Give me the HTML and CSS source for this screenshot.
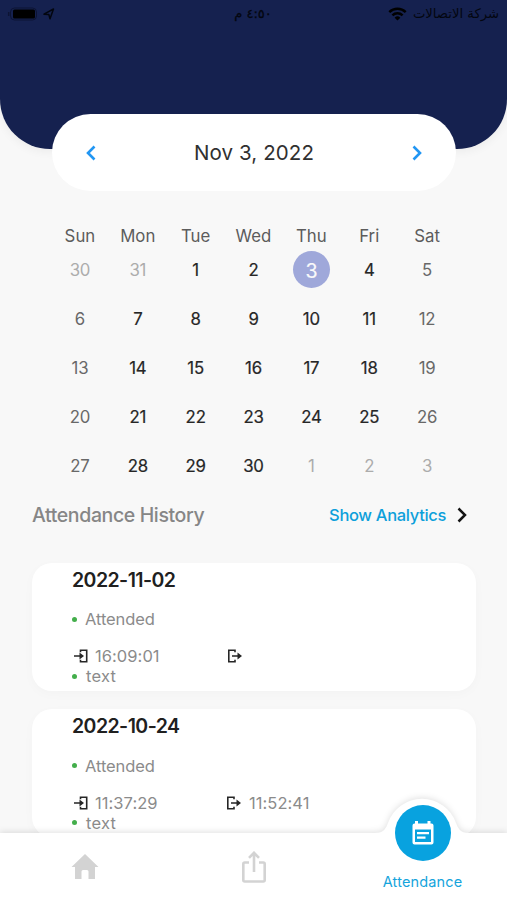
FILE: index.html
```html
<!DOCTYPE html>
<html lang="en">
<head>
<meta charset="utf-8">
<title>Attendance</title>
<link rel="stylesheet" href="styles.css">
</head>
<body>
<div class="app">
  <main class="content">
    <header class="header">
      <div class="status">
        <div class="status-side">
          <svg width="30" height="14" viewBox="0 0 30 14"><rect x="3.500" y="1" width="26" height="12" rx="4" fill="none" stroke="#0d1434"/><rect x="6" y="2.500" width="22" height="9" rx="1.500" fill="#000"/><path d="M1.700 5v4" stroke="#0d1434" stroke-width="1.500"/></svg>
          <svg width="12" height="12" viewBox="0 0 12 12"><path d="M1 6.200 10.500 1 7 10.800 5.800 6.400Z" fill="none" stroke="#03060f" stroke-width="1.500" stroke-linejoin="round"/></svg>
        </div>
        <div class="status-time" dir="rtl">٤:٥٠ م</div>
        <div class="status-side status-end">
          <svg width="19" height="14" viewBox="0 0 19 14"><g fill="none" stroke="#000" stroke-width="2.400"><path d="M1.300 5.200a11.600 11.600 0 0 1 16.400 0"/><path d="M4.400 8.400a7.200 7.200 0 0 1 10.200 0"/></g><path d="M9.500 13.600 6.600 10.700a4.100 4.100 0 0 1 5.800 0Z"/></svg>
          <span class="carrier" dir="rtl">شركة الاتصالات</span>
        </div>
      </div>
    </header>
    <section class="date-bar">
      <svg width="10" height="16" viewBox="0 0 10 16"><path d="M8.500 1.500 2 8l6.500 6.500" fill="none" stroke="#2196f3" stroke-width="2.600"/></svg>
      <span class="date">Nov 3, 2022</span>
      <svg width="10" height="16" viewBox="0 0 10 16"><path d="M1.500 1.500 8 8l-6.500 6.500" fill="none" stroke="#2196f3" stroke-width="2.600"/></svg>
    </section>
    <section class="calendar">
      <div class="week names"><span>Sun</span><span>Mon</span><span>Tue</span><span>Wed</span><span>Thu</span><span>Fri</span><span>Sat</span></div>
      <div class="week"><span class="out">30</span><span class="out">31</span><span>1</span><span>2</span><span class="today"><b>3</b></span><span>4</span><span class="off">5</span></div>
      <div class="week"><span class="off">6</span><span>7</span><span>8</span><span>9</span><span>10</span><span>11</span><span class="off">12</span></div>
      <div class="week"><span class="off">13</span><span>14</span><span>15</span><span>16</span><span>17</span><span>18</span><span class="off">19</span></div>
      <div class="week"><span class="off">20</span><span>21</span><span>22</span><span>23</span><span>24</span><span>25</span><span class="off">26</span></div>
      <div class="week"><span class="off">27</span><span>28</span><span>29</span><span>30</span><span class="out">1</span><span class="out">2</span><span class="out">3</span></div>
    </section>
    <section class="history-head">
      <h2>Attendance History</h2>
      <a class="analytics"><span>Show Analytics</span><svg width="10" height="16" viewBox="0 0 10 16"><path d="M1.500 1.500 8 8l-6.500 6.500" fill="none" stroke="#151515" stroke-width="2.500"/></svg></a>
    </section>
    <section class="cards">
      <article class="card">
        <h3>2022-11-02</h3>
        <p class="state"><i class="dot"></i>Attended</p>
        <div class="times">
          <span class="time"><svg width="16" height="14" viewBox="0 0 16 14"><g fill="none" stroke="#262626" stroke-width="1.600"><path d="M8.500 3.200V1.200h6.200v11.600H8.500v-2M2 7h8"/></g><path d="M7.500 3.600 12 7l-4.500 3.400Z" fill="#262626"/></svg>16:09:01</span>
          <span class="time shifted"><svg width="16" height="14" viewBox="0 0 16 14"><g fill="none" stroke="#262626" stroke-width="1.600"><path d="M8 3.200V1.200H1.800v11.600H8v-2M5 7H12"/></g><path d="M10.500 3.600 15 7l-4.500 3.400Z" fill="#262626"/></svg></span>
        </div>
        <p class="note"><i class="dot"></i>text</p>
      </article>
      <article class="card">
        <h3>2022-10-24</h3>
        <p class="state"><i class="dot"></i>Attended</p>
        <div class="times">
          <span class="time"><svg width="16" height="14" viewBox="0 0 16 14"><g fill="none" stroke="#262626" stroke-width="1.600"><path d="M8.500 3.200V1.200h6.200v11.600H8.500v-2M2 7h8"/></g><path d="M7.500 3.600 12 7l-4.500 3.400Z" fill="#262626"/></svg>11:37:29</span>
          <span class="time"><svg width="16" height="14" viewBox="0 0 16 14"><g fill="none" stroke="#262626" stroke-width="1.600"><path d="M8 3.200V1.200H1.800v11.600H8v-2M5 7H12"/></g><path d="M10.500 3.600 15 7l-4.500 3.400Z" fill="#262626"/></svg>11:52:41</span>
        </div>
        <p class="note"><i class="dot"></i>text</p>
      </article>
    </section>
  </main>
  <nav class="nav">
    <svg class="nav-shape" width="507" height="102" viewBox="0 0 507 102"><path d="M0 35H375C384 35 386 30 388 25A36 36 0 0 1 456 25C458 30 460 35 469 35H507V102H0Z" fill="#fff"/></svg>
    <a class="tab"><svg width="28" height="26" viewBox="0 0 28 26"><path d="M14 0 27.500 13H24V25H17.500V17.500Q17.500 16 16 16H12Q10.500 16 10.500 17.500V25H4V13H.5Z" fill="#d3d3d3"/></svg></a>
    <a class="tab"><svg width="24" height="32" viewBox="0 0 24 32"><path d="M7 11.500H2.800Q1.300 11.500 1.300 13V29Q1.300 30.500 2.800 30.500H21.200Q22.700 30.500 22.700 29V13Q22.700 11.500 21.200 11.500H17M12 21V2M7 6.800 12 1.800 17 6.800" fill="none" stroke="#d3d3d3" stroke-width="2.600"/></svg></a>
    <a class="tab active">
      <span class="bubble"><svg width="22" height="24" viewBox="0 0 22 24"><path fill="#fff" fill-rule="evenodd" d="M3 2.500V0H6V2.500H15.500V0H18.500V2.500H19.500Q21.500 2.500 21.500 4.500V21.500Q21.500 23.500 19.500 23.500H2.500Q.5 23.500 .5 21.500V4.500Q.5 2.500 2.500 2.500ZM3 8.500V21H19V8.500ZM5 11H17V13.200H5ZM5 15.500H13.500V17.700H5Z"/></svg></span>
      <span class="label">Attendance</span>
    </a>
  </nav>
</div>
</body>
</html>
```
FILE: styles.css
```css
* { box-sizing: border-box; margin: 0; padding: 0; }
body { font-family: Inter, "Noto Sans", sans-serif; background: #f8f8f8; }
svg { display: block; flex: none; }
.app { width: 507px; height: 900px; display: flex; flex-direction: column; overflow: hidden; background: #f8f8f8; }
.content { height: 833px; flex: none; overflow: hidden; }
.header { height: 149px; background: #15214f; border-radius: 0 0 50px 50px; box-shadow: 0 3px 10px rgba(0,0,0,.05); }
.status { display: grid; grid-template-columns: 1fr auto 1fr; align-items: center; height: 27px; padding: 0 8px 0 7px; color: #03060f; font-family: "DejaVu Sans", sans-serif; }
.status-side { display: flex; align-items: center; gap: 6px; }
.status-end { justify-content: flex-end; }
.status-time { font-size: 13px; -webkit-text-stroke: .3px #03060f; }
.carrier { font-size: 13.200px; white-space: nowrap; }
.date-bar { position: relative; width: 404px; height: 77px; margin: -35px auto 0 52px; padding: 0 34px; background: #fff; border-radius: 38.500px; display: flex; align-items: center; justify-content: space-between; }
.date { font-size: 20.500px; color: #303030; letter-spacing: .1px; }
.calendar { width: 405px; margin: 32px 0 0 51px; }
.week { display: grid; grid-template-columns: repeat(7, 1fr); height: 48.8px; align-items: center; justify-items: center; font-size: 16.800px; font-weight: 400; color: #262626; letter-spacing: -.2px; -webkit-text-stroke: .2px; }
.names { height: 26px; margin-bottom: -3px; color: #5c5c5c; letter-spacing: 0; -webkit-text-stroke: 0; }
.off { color: #686868; -webkit-text-stroke: 0; }
.out { color: #acacac; -webkit-text-stroke: 0; }
.today { width: 37px; height: 37px; margin-top: -1px; border-radius: 50%; background: #9fa8da; display: flex; align-items: center; justify-content: center; }
.today b { padding-top: 2px; font-size: 19.500px; font-weight: 400; color: #fafafa; }
.history-head { display: flex; justify-content: space-between; align-items: center; height: 30px; margin-top: 10px; padding: 0 40px 0 32px; }
.history-head h2 { font-size: 19.500px; font-weight: 500; color: #868686; letter-spacing: -.38px; }
.analytics { display: flex; align-items: center; gap: 11px; font-size: 16.500px; font-weight: 500; color: #0da0db; letter-spacing: -.33px; }
.cards { padding: 33px 31px 0 32px; }
.card { height: 128px; margin-bottom: 18.500px; padding: 4px 40px 0; background: #fff; border-radius: 20px; box-shadow: 0 3px 12px rgba(0,0,0,.025); }
.card h3 { font-size: 19.500px; line-height: 26px; font-weight: 600; color: #202020; letter-spacing: -.55px; }
.state, .note, .time { display: flex; align-items: center; font-size: 16.500px; line-height: 20px; color: #8b8b8b; }
.state { margin-top: 16.500px; letter-spacing: -.08px; }
.dot { width: 5px; height: 5px; margin: 0 8px 0 0; border-radius: 50%; background: #43ae4b; }
.times { display: grid; grid-template-columns: 154px 1fr; height: 20px; margin-top: 17px; }
.time { gap: 7px; letter-spacing: .05px; }
.shifted { margin-left: 1px; }
.note { letter-spacing: .2px; }
.note .dot { margin-right: 9px; }
.nav { position: relative; height: 67px; display: grid; grid-template-columns: repeat(3, 1fr); }
.nav-shape { position: absolute; left: 0; bottom: 0; filter: drop-shadow(0 -1px 3px rgba(0,0,0,.12)); }
.tab { position: relative; display: flex; flex-direction: column; align-items: center; justify-content: center; }
.active { justify-content: flex-start; margin-top: -28px; }
.bubble { width: 56px; height: 56px; border-radius: 50%; background: #08a2df; display: flex; align-items: center; justify-content: center; }
.label { margin-top: 12px; font-size: 14.500px; line-height: 18px; color: #15a4dc; letter-spacing: .15px; }
```
